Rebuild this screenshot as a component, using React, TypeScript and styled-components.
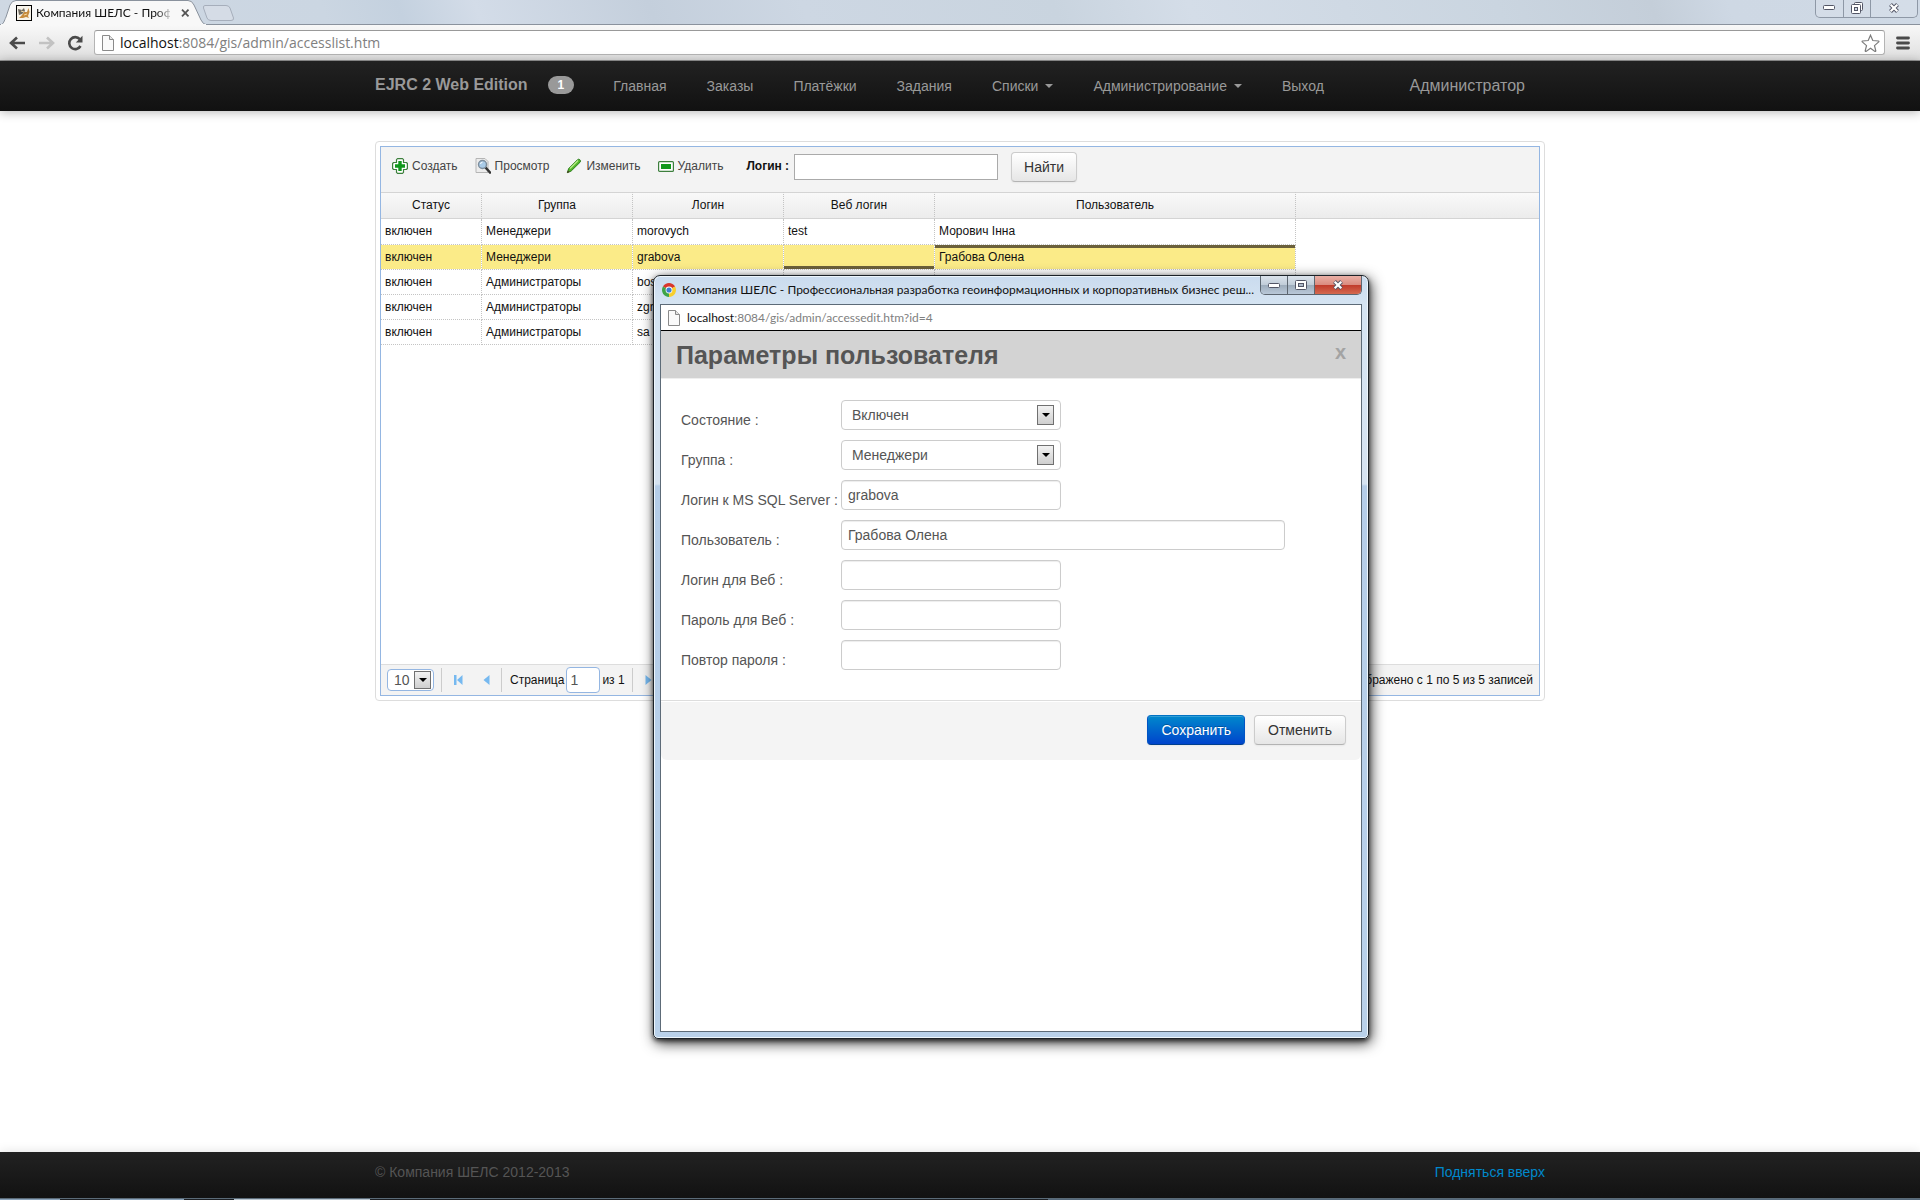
import React, { useState } from "react";
import styled, { createGlobalStyle, css } from "styled-components";

const Global = createGlobalStyle`
  *, *::before, *::after { box-sizing: border-box; }
  body {
    margin: 0;
    background: #fff;
    color: #555;
    font: 14px/20px "Liberation Sans", Arial, sans-serif;
  }
  button, input, select { font: inherit; margin: 0; }
`;

const systemFont = `"Open Sans", "Noto Sans", sans-serif`;
const captionFont = `Lato, "Noto Sans", sans-serif`;

const Screen = styled.div`
  position: relative;
  display: flex;
  flex-direction: column;
  min-height: 100vh;
`;

/* ---------- browser chrome ---------- */

const TabStrip = styled.div`
  display: flex;
  justify-content: space-between;
  height: 25px;
  border-bottom: 1px solid #8a929d;
  background: linear-gradient(70deg, #cfd8e3 0%, #cbd6e2 17%, #c4d1df 21%, #d3dce8 25%, #c4cfdc 34%, #cdd7e3 42%, #c9d4df 55%, #d4dde8 62%, #cad5e0 78%, #c4ced9 86%, #ced8e4 90%, #cfd9e5 100%);
`;

const Tabs = styled.div`
  display: flex;
`;

const Tab = styled.div`
  position: relative;
  display: flex;
  align-items: center;
  width: 205px;
  height: 25px;
  padding: 0 14px 0 16px;
  gap: 4px;
  font: 12px/20px ${captionFont};
  color: #111;
`;

const TabShape = styled.svg`
  position: absolute;
  inset: 0;
`;

const Favicon = styled.svg`
  position: relative;
  flex: none;
`;

const TabTitle = styled.span`
  position: relative;
  flex: none;
  width: 134px;
  white-space: nowrap;
  mask-image: linear-gradient(90deg, #000 120px, transparent 138px);
`;

const IconButton = styled.button`
  position: relative;
  display: flex;
  align-items: center;
  justify-content: center;
  padding: 0;
  border: 0;
  background: none;
`;

const WindowButtons = styled.div`
  display: flex;
  height: 18px;
  margin-right: 2px;
  border: 1px solid #8e98a6;
  border-top: 0;
  border-radius: 0 0 5px 5px;
  overflow: hidden;
`;

const WindowButton = styled.button<{ $wide?: boolean }>`
  display: flex;
  align-items: center;
  justify-content: center;
  width: ${(p) => (p.$wide ? 47 : 27)}px;
  padding: 0 0 2px;
  border: 0;
  background: rgba(255, 255, 255, 0.12);
  & + & { border-left: 1px solid #8e98a6; }
`;

const Toolbar = styled.div`
  display: flex;
  align-items: center;
  height: 36px;
  padding: 0 8px 0 9px;
  border-bottom: 1px solid #979797;
  background: linear-gradient(#f8f8f8, #dfdfdf);
`;

const NavIcons = styled.div`
  display: flex;
  gap: 12px;
  width: 85px;
`;

const Address = styled.div`
  display: flex;
  flex: 1;
  align-items: center;
  height: 25px;
  padding: 0 4px 0 7px;
  border: 1px solid #b4b4b4;
  border-top-color: #999;
  border-radius: 3px;
  background: #fff;
`;

const AddressText = styled.span<{ $small?: boolean }>`
  flex: 1;
  margin-left: ${(p) => (p.$small ? 7 : 6)}px;
  font: ${(p) => (p.$small ? `12px/20px ${captionFont}` : `14px/20px ${systemFont}`)};
  color: #808080;
  b { font-weight: 400; color: #111; }
`;

const MenuButton = styled(IconButton)`
  width: 18px;
  margin-left: 9px;
`;

/* ---------- site header and footer ---------- */

const Container = styled.div`
  width: 100%;
  max-width: 1170px;
  margin: 0 auto;
`;

const NavBar = styled.header`
  flex: none;
  background: linear-gradient(#222, #111);
  box-shadow: 0 1px 10px rgba(0, 0, 0, 0.3);
`;

const NavInner = styled(Container)`
  display: flex;
  align-items: center;
  height: 50px;
  color: #999;
`;

const Brand = styled.a`
  padding-bottom: 2px;
  color: #999;
  font-size: 16px;
  font-weight: 700;
  text-decoration: none;
`;

const Badge = styled.span`
  height: 18px;
  margin: 0 19px 3px 20px;
  padding: 0 10px;
  border-radius: 9px;
  background: #999;
  color: #fff;
  font-size: 12px;
  font-weight: 700;
  line-height: 18px;
`;

const Nav = styled.nav`
  display: flex;
  flex: 1;
`;

const NavLink = styled.a`
  display: flex;
  align-items: center;
  gap: 7px;
  padding: 0 20px;
  color: #999;
  text-decoration: none;
`;

const Caret = styled.span`
  border: 4px solid transparent;
  border-top-color: #999;
  border-bottom: 0;
`;

const UserName = styled.span`
  padding-right: 20px;
  font-size: 16px;
`;

const Footer = styled.footer`
  margin-top: auto;
  background: linear-gradient(#222, #111);
  box-shadow: 0 -1px 10px rgba(0, 0, 0, 0.1);
`;

const FooterInner = styled(Container)`
  display: flex;
  align-items: center;
  justify-content: space-between;
  height: 46px;
  padding-bottom: 6px;
  a { color: #08c; text-decoration: none; }
`;

const TaskEdge = styled.div`
  height: 2px;
  border-top: 1px solid #5b6b78;
  background: linear-gradient(90deg, #8aa3ba 0 60px, #1b1f24 60px 110px, #8aa3ba 110px 184px, #1b1f24 184px 234px, #b9c6d0 234px 370px, #1b1f24 370px 1048px, #54687a 1048px);
`;

/* ---------- grid ---------- */

const GridFrame = styled(Container)`
  margin-top: 30px;
  padding: 4px;
  border: 1px solid #ddd;
  border-radius: 4px;
`;

const Grid = styled.section`
  display: flex;
  flex-direction: column;
  height: 550px;
  border: 1px solid #94b6e2;
  font-size: 12px;
`;

const GridTools = styled.form`
  display: flex;
  align-items: center;
  height: 45px;
  padding: 0 10px 8px 11px;
  background: #f3f3f3;
`;

const ToolButton = styled.button`
  display: flex;
  align-items: center;
  gap: 4px;
  margin-right: 17px;
  padding: 0;
  border: 0;
  background: none;
  color: #444;
  line-height: 18px;
`;

const SearchLabel = styled.label`
  margin: 0 5px 0 6px;
  color: #111;
  font-weight: 700;
`;

const SearchInput = styled.input`
  width: 204px;
  height: 26px;
  margin: 2px 13px 0 0;
  border: 1px solid #aaa;
  background: #fff;
`;

const Button = styled.button<{ $primary?: boolean }>`
  height: 30px;
  padding: 0 13px;
  border: 1px solid #ccc;
  border-bottom-color: #b3b3b3;
  border-radius: 4px;
  background: linear-gradient(#fff, #e6e6e6);
  box-shadow: inset 0 1px 0 rgba(255, 255, 255, 0.2), 0 1px 2px rgba(0, 0, 0, 0.05);
  color: #333;
  font-size: 14px;
  ${(p) =>
    p.$primary &&
    css`
      border-color: #0072c4 #0054c4 #003f8f;
      background: linear-gradient(#08c, #04c);
      color: #fff;
      text-shadow: 0 -1px 0 rgba(0, 0, 0, 0.25);
    `}
`;

const FindButton = styled(Button)`
  margin-top: 2px;
  padding: 0 12px;
`;

const Table = styled.table`
  width: 100%;
  table-layout: fixed;
  border-spacing: 0;
  color: #111;
  th {
    height: 27px;
    padding: 0 0 2px;
    border: solid #d4d4d4;
    border-width: 1px 0;
    background: linear-gradient(#f9f9f9, #ececec);
    font-weight: 400;
  }
  th:not(:last-child) { border-right: 1px dotted #c4c4c4; }
`;

const stripes: Record<string, string> = {
  top: "linear-gradient(#6b603b 3px, transparent 3px)",
  bottom: "linear-gradient(0deg, #6b603b 3px, transparent 3px)",
};

const Cell = styled.td<{ $on?: boolean; $edge?: string }>`
  height: 25px;
  padding: 0 4px;
  border-right: 1px dotted #c4c4c4;
  border-bottom: 1px dotted #c4c4c4;
  background-color: ${(p) => (p.$on ? "#fbeb88" : "#fff")};
  background-image: ${(p) => (p.$edge ? stripes[p.$edge] : "none")};
  background-clip: padding-box;
  tr:first-child > & {
    height: 26px;
    padding-bottom: 2px;
  }
`;

const Pager = styled.div`
  display: flex;
  align-items: center;
  height: 31px;
  margin-top: auto;
  padding: 0 6px;
  border-top: 1px solid #ddd;
  background: #f3f3f3;
  color: #111;
`;

const SelectBox = styled.span<{ $small?: boolean }>`
  position: relative;
  display: inline-flex;
  justify-self: start;
  select {
    width: ${(p) => (p.$small ? 47 : 220)}px;
    height: ${(p) => (p.$small ? 22 : 30)}px;
    padding: 0 ${(p) => (p.$small ? 6 : 10)}px;
    border: 1px solid ${(p) => (p.$small ? "#94b6e2" : "#ccc")};
    border-radius: 4px;
    appearance: none;
    background: #fff;
    color: #555;
    font-size: 14px;
  }
`;

const DropArrow = styled.span<{ $small?: boolean }>`
  position: absolute;
  top: ${(p) => (p.$small ? 2 : 5)}px;
  right: ${(p) => (p.$small ? 3 : 7)}px;
  display: flex;
  align-items: center;
  justify-content: center;
  width: 17px;
  height: ${(p) => (p.$small ? 18 : 20)}px;
  border: 1px solid #707070;
  background: linear-gradient(#f2f2f2, #cfcfcf);
  pointer-events: none;
  &::after {
    content: "";
    border: 4px solid transparent;
    border-top-color: #000;
    border-bottom: 0;
  }
`;

const Separator = styled.span`
  width: 1px;
  height: 24px;
  margin: 0 8px 0 7px;
  background: #ccc;
`;

const PageButtons = styled.div`
  display: flex;
  gap: 12px;
`;

const PageButton = styled(IconButton)`
  width: 16px;
  height: 22px;
`;

const PageLabel = styled.label`
  display: flex;
  align-items: center;
  gap: 2px;
`;

const PageInput = styled.input`
  width: 34px;
  height: 26px;
  padding: 0 3px;
  border: 1px solid #94b6e2;
  border-radius: 4px;
  background: #fff;
  color: #555;
  font-size: 14px;
`;

const PageTotal = styled.span`
  margin-left: auto;
`;

/* ---------- popup window ---------- */

const Popup = styled.section`
  position: absolute;
  top: 275px;
  left: calc(50% - 307px);
  display: flex;
  flex-direction: column;
  width: 716px;
  height: 764px;
  padding: 0 6px 6px;
  border: 1px solid #1c2228;
  border-radius: 7px 7px 5px 5px;
  background: linear-gradient(#cadbee, #d5e4f2 28px, #d6e3f1 208px, #b5cde8 210px, #b9d1ea);
  box-shadow: inset 0 0 0 1px #eef6fc, 0 2px 4px rgba(0, 0, 0, 0.6), 2px 4px 14px rgba(0, 0, 0, 0.8);
`;

const PopupTitle = styled.div`
  display: flex;
  align-items: center;
  justify-content: space-between;
  height: 28px;
  color: #111;
  font: 12px/28px ${captionFont};
`;

const PopupCaption = styled.div`
  display: flex;
  flex: 1;
  align-items: center;
  gap: 6px;
  min-width: 0;
  padding-left: 2px;
  white-space: nowrap;
  svg { flex: none; }
`;

const PopupButtons = styled.div`
  display: flex;
  align-self: flex-start;
  flex: none;
  height: 19px;
  border: 1px solid #5c6670;
  border-top: 0;
  border-radius: 0 0 5px 5px;
  overflow: hidden;
`;

const PopupButton = styled.button<{ $close?: boolean }>`
  display: flex;
  align-items: center;
  justify-content: center;
  width: ${(p) => (p.$close ? 46 : 27)}px;
  padding: 0;
  border: 0;
  border-right: ${(p) => (p.$close ? "0" : "1px solid #5c6670")};
  background: ${(p) =>
    p.$close
      ? "linear-gradient(#eab0a6, #da8a7e 9px, #c0392a 9px, #d46a50)"
      : "linear-gradient(#dbe3eb, #c0ccd8 9px, #9dacbb 9px, #b9c8d8)"};
`;

const PopupPage = styled.div`
  flex: 1;
  border: 1px solid #5d6b78;
  background: #fff;
`;

const PopupAddress = styled.div`
  display: flex;
  align-items: center;
  height: 26px;
  padding-left: 7px;
  border-bottom: 1px solid #000;
`;

const DialogHead = styled.div`
  display: flex;
  align-items: center;
  justify-content: space-between;
  height: 48px;
  padding: 0 15px;
  border-bottom: 1px solid #eee;
  background: #d3d3d3;
  h3 { margin: 0; font-size: 25px; line-height: 40px; }
`;

const CloseButton = styled.button`
  padding: 0 0 5px;
  border: 0;
  background: none;
  color: #a3a3a3;
  font-size: 20px;
  font-weight: 700;
  line-height: 20px;
`;

const Fields = styled.div`
  display: grid;
  gap: 10px;
  padding: 21px 20px 30px;
`;

const Field = styled.div`
  display: grid;
  grid-template-columns: 160px 1fr;
  align-items: center;
  label { padding-top: 10px; white-space: nowrap; }
`;

const TextInput = styled.input<{ $wide?: boolean }>`
  width: ${(p) => (p.$wide ? 444 : 220)}px;
  height: 30px;
  padding: 0 6px;
  border: 1px solid #ccc;
  border-radius: 4px;
  background: #fff;
  box-shadow: inset 0 1px 1px rgba(0, 0, 0, 0.075);
  color: #555;
`;

const DialogFoot = styled.div`
  display: flex;
  justify-content: flex-end;
  gap: 9px;
  padding: 14px 15px 15px;
  border-top: 1px solid #ddd;
  border-radius: 0 0 6px 6px;
  background: #f4f4f4;
  box-shadow: inset 0 1px 0 #fff;
`;

/* ---------- icons ---------- */

const PageIcon = () => (
  <svg width="12" height="16" viewBox="0 0 12 16">
    <path d="M.5 .5h7l4 4v11H.5z" fill="#fafafa" stroke="#8a8a8a" />
    <path d="M7.500 .5v4h4" fill="#e4e4e4" stroke="#8a8a8a" />
  </svg>
);

const BackIcon = ({ color, flip }: { color: string; flip?: boolean }) => (
  <svg width="17" height="14" viewBox="0 0 17 14">
    <path
      d={flip ? "M1 7h14M9 1.500l6 5.500l-6 5.500" : "M16 7H2M8 1.500L2 7l6 5.500"}
      fill="none"
      stroke={color}
      strokeWidth="2.600"
    />
  </svg>
);

const ReloadIcon = () => (
  <svg width="16" height="16" viewBox="0 0 16 16">
    <path d="M12.800 4.200A6 6 0 1 0 13.500 11" fill="none" stroke="#4a4a4a" strokeWidth="2.600" />
    <path d="M15.500 .8v6.700H8.800z" fill="#4a4a4a" />
  </svg>
);

const CreateIcon = () => (
  <svg width="16" height="16" viewBox="0 0 16 16">
    <path
      d="M5.500 .6h5l1 1v2.900h2.900l1 1v5l-1 1h-2.900v2.900l-1 1h-5l-1-1v-2.900H1.600l-1-1v-5l1-1h2.900V1.600z"
      fill="#fff"
      stroke="#3d7f3d"
      strokeWidth="1.200"
      strokeLinejoin="round"
    />
    <path d="M6.300 3h3.400v3.300H13v3.400H9.700V13H6.300V9.700H3V6.300h3.300z" fill="#11981c" />
  </svg>
);

const ViewIcon = () => (
  <svg width="16" height="16" viewBox="0 0 16 16">
    <path d="M1 .5h9l3 3v11H1z" fill="#ececec" stroke="#b5b5b5" />
    <path d="M10.500 9.500l4.500 5" stroke="#333" strokeWidth="2.600" strokeLinecap="round" />
    <circle cx="7.500" cy="6.500" r="4" fill="#a9cbe8" stroke="#7d8d9c" strokeWidth="1.400" />
    <path d="M5.500 6a2.200 2.200 0 0 1 2-1.800" stroke="#fff" fill="none" />
  </svg>
);

const EditIcon = () => (
  <svg width="16" height="16" viewBox="0 0 16 16">
    <path d="M1.300 14.700l1.400-4.200L11.500 1.700q1.200-1 2.300 0q1.300 1.200 .3 2.500L5.200 13z" fill="#55b82c" stroke="#2d7d1c" />
    <path d="M4 10.500l8-8" stroke="#b9ee8a" strokeWidth="1.200" />
    <path d="M1 15l1-2.600 1.600 1.500z" fill="#4a3520" />
  </svg>
);

const DeleteIcon = () => (
  <svg width="16" height="16" viewBox="0 0 16 16">
    <rect x=".6" y="3.600" width="14.800" height="9.800" rx="1" fill="#fff" stroke="#3d7f3d" strokeWidth="1.200" />
    <rect x="3" y="6" width="10" height="5" fill="#11981c" />
  </svg>
);

const FirstIcon = () => (
  <svg width="9" height="10" viewBox="0 0 9 10">
    <path d="M0 0h2.500v10H0zM8.500 0v10L3 5z" fill="#76b9f0" />
  </svg>
);

const ArrowIcon = ({ right }: { right?: boolean }) => (
  <svg width="7" height="10" viewBox="0 0 7 10">
    <path d={right ? "M.5 0v10L6.500 5z" : "M6.500 0v10L.5 5z"} fill="#76b9f0" />
  </svg>
);

const ChromeIcon = () => (
  <svg width="14" height="14" viewBox="0 0 14 14">
    <path d="M7 7L.94 3.500A7 7 0 0 1 13.060 3.500z" fill="#d9372c" />
    <path d="M7 7L13.060 3.500A7 7 0 0 1 7 14z" fill="#f7cf2e" />
    <path d="M7 7L7 14A7 7 0 0 1 .94 3.500z" fill="#3fa447" />
    <circle cx="7" cy="7" r="3.400" fill="#fff" />
    <circle cx="7" cy="7" r="2.600" fill="#3d7fd0" />
  </svg>
);

const MinIcon = () => (
  <svg width="13" height="7" viewBox="0 0 13 7">
    <rect x=".5" y="1.500" width="11" height="4" rx="1" fill="#fff" stroke="#535666" />
  </svg>
);

const MaxIcon = () => (
  <svg width="12" height="10" viewBox="0 0 12 10">
    <rect x=".5" y=".5" width="11" height="9" rx="1" fill="#fff" stroke="#535666" />
    <rect x="3.500" y="3.500" width="5" height="3" fill="#b0bccb" stroke="#535666" />
  </svg>
);

const RestoreIcon = () => (
  <svg width="13" height="12" viewBox="0 0 13 12">
    <rect x="3.500" y=".5" width="8" height="8" rx="1" fill="#fff" stroke="#535666" />
    <rect x=".5" y="2.500" width="9" height="9" rx="1" fill="#fff" stroke="#535666" />
    <rect x="3.500" y="5.500" width="3" height="3" fill="#cfd9e5" stroke="#535666" />
  </svg>
);

const CrossIcon = () => (
  <svg width="12" height="10" viewBox="0 0 12 10">
    <path d="M2.500 1.500l7 7M9.500 1.500l-7 7" stroke="#535666" strokeWidth="4" />
    <path d="M2.700 1.700l6.600 6.600M9.300 1.700L2.700 8.300" stroke="#fff" strokeWidth="2.200" />
  </svg>
);

/* ---------- data ---------- */

const links = [
  { text: "Главная" },
  { text: "Заказы" },
  { text: "Платёжки" },
  { text: "Задания" },
  { text: "Списки", menu: true },
  { text: "Администрирование", menu: true },
  { text: "Выход" },
];

const tools = [
  { text: "Создать", icon: <CreateIcon /> },
  { text: "Просмотр", icon: <ViewIcon /> },
  { text: "Изменить", icon: <EditIcon /> },
  { text: "Удалить", icon: <DeleteIcon /> },
];

const columns = ["Статус", "Группа", "Логин", "Веб логин", "Пользователь"];
const widths = [101, 151, 151, 151, 361];

const rows = [
  ["включен", "Менеджери", "morovych", "test", "Морович Інна"],
  ["включен", "Менеджери", "grabova", "", "Грабова Олена"],
  ["включен", "Администраторы", "bos", "", ""],
  ["включен", "Администраторы", "zgr", "", ""],
  ["включен", "Администраторы", "sa", "", ""],
];

const selected = 1;
const edges: Record<number, string> = { 3: "bottom", 4: "top" };

const inputs = [
  { id: "sql", text: "Логин к MS SQL Server :", value: "grabova" },
  { id: "user", text: "Пользователь :", value: "Грабова Олена", wide: true },
  { id: "web", text: "Логин для Веб :", value: "" },
  { id: "pass", text: "Пароль для Веб :", value: "", type: "password" },
  { id: "again", text: "Повтор пароля :", value: "", type: "password" },
];

const BrowserChrome = () => (
  <>
    <TabStrip>
      <Tabs>
        <Tab>
          <TabShape width="236" height="25" viewBox="0 0 236 25">
            <path d="M0 25C4 24 4 21 6 17L10 5Q12 .5 16 .5H188Q192 .5 194 5L201 20Q203 24.500 207 25z" fill="#f8f8f8" stroke="#8a929d" />
            <path d="M1 25h205" stroke="#f8f8f8" strokeWidth="2" />
            <path d="M205 5.500H226Q229 5.500 230 8L233.500 18Q234 20.500 231 20.500H211Q208 20.500 207 18L203.500 8Q203 5.500 205 5.500z" fill="#d5dce6" stroke="#a6aebb" />
          </TabShape>
          <Favicon width="16" height="16" viewBox="0 0 16 16">
            <rect x=".5" y=".5" width="15" height="15" fill="#f7f3ea" stroke="#000" />
            <path d="M3 13l3-3 2-3 3 0 1.500-4 1 4-1.500 4 1 2-3-1-3 1z" fill="#c68a3c" />
            <path d="M2 4l4 1 2-2 1 3-3 3-3 1z" fill="#6f6a60" />
            <path d="M5 6l3 1M8 10l3-1" stroke="#f3d9a0" />
          </Favicon>
          <TabTitle>Компания ШЕЛС - Профе</TabTitle>
          <IconButton aria-label="Закрыть вкладку">
            <svg width="18" height="8" viewBox="0 0 18 8">
              <path d="M8 .7l6.500 6.600M14.500 .7L8 7.300" stroke="#555" strokeWidth="1.800" />
            </svg>
          </IconButton>
        </Tab>
      </Tabs>
      <WindowButtons>
        <WindowButton aria-label="Свернуть"><MinIcon /></WindowButton>
        <WindowButton aria-label="Восстановить"><RestoreIcon /></WindowButton>
        <WindowButton $wide aria-label="Закрыть"><CrossIcon /></WindowButton>
      </WindowButtons>
    </TabStrip>
    <Toolbar>
      <NavIcons>
        <IconButton aria-label="Назад"><BackIcon color="#4a4a4a" /></IconButton>
        <IconButton aria-label="Вперёд"><BackIcon color="#c2c2c2" flip /></IconButton>
        <IconButton aria-label="Обновить"><ReloadIcon /></IconButton>
      </NavIcons>
      <Address>
        <PageIcon />
        <AddressText><b>localhost</b>:8084/gis/admin/accesslist.htm</AddressText>
        <svg width="19" height="18" viewBox="0 0 19 18">
          <path
            d="M9.500 1.200l2.300 5.300 5.700 .5q.7 .3 .2 .9l-4.200 3.700 1.300 5.300q-.1 .8-.8 .5L9.500 14.300 5 17.400q-.7 .3-.8-.5l1.300-5.300L1.300 7.900q-.5-.6 .2-.9l5.700-.5z"
            fill="#fff"
            stroke="#7c7c7c"
            strokeWidth="1.200"
          />
        </svg>
      </Address>
      <MenuButton aria-label="Меню">
        <svg width="14" height="14" viewBox="0 0 14 14">
          <path d="M1.500 2h11M1.500 7h11M1.500 12h11" stroke="#4a4a4a" strokeWidth="2.800" strokeLinecap="round" />
        </svg>
      </MenuButton>
    </Toolbar>
  </>
);

const AccessGrid = () => {
  const [page, setPage] = useState("1");
  return (
    <GridFrame as="main">
      <Grid>
        <GridTools onSubmit={(e) => e.preventDefault()}>
          {tools.map((t) => (
            <ToolButton key={t.text} type="button">
              {t.icon}
              {t.text}
            </ToolButton>
          ))}
          <SearchLabel htmlFor="search">Логин :</SearchLabel>
          <SearchInput id="search" type="text" />
          <FindButton type="submit">Найти</FindButton>
        </GridTools>
        <Table>
          <colgroup>
            {widths.map((w, i) => (
              <col key={i} width={w} />
            ))}
            <col />
          </colgroup>
          <thead>
            <tr>
              {columns.map((c) => (
                <th key={c}>{c}</th>
              ))}
              <th aria-hidden="true" />
            </tr>
          </thead>
          <tbody>
            {rows.map((row, r) => (
              <tr key={r}>
                {row.map((text, c) => (
                  <Cell key={c} $on={r === selected} $edge={r === selected ? edges[c] : undefined}>
                    {text}
                  </Cell>
                ))}
              </tr>
            ))}
          </tbody>
        </Table>
        <Pager>
          <SelectBox $small>
            <select aria-label="Записей на странице">
              <option>10</option>
            </select>
            <DropArrow $small />
          </SelectBox>
          <Separator />
          <PageButtons>
            <PageButton aria-label="Первая"><FirstIcon /></PageButton>
            <PageButton aria-label="Предыдущая"><ArrowIcon /></PageButton>
          </PageButtons>
          <Separator />
          <PageLabel>
            Страница
            <PageInput value={page} onChange={(e) => setPage(e.target.value)} />
            из 1
          </PageLabel>
          <Separator />
          <PageButton aria-label="Следующая"><ArrowIcon right /></PageButton>
          <PageTotal>Отображено с 1 по 5 из 5 записей</PageTotal>
        </Pager>
      </Grid>
    </GridFrame>
  );
};

const UserPopup = () => (
  <Popup>
    <PopupTitle>
      <PopupCaption>
        <ChromeIcon />
        <span>Компания ШЕЛС - Профессиональная разработка геоинформационных и корпоративных бизнес реш...</span>
      </PopupCaption>
      <PopupButtons>
        <PopupButton aria-label="Свернуть"><MinIcon /></PopupButton>
        <PopupButton aria-label="Развернуть"><MaxIcon /></PopupButton>
        <PopupButton $close aria-label="Закрыть"><CrossIcon /></PopupButton>
      </PopupButtons>
    </PopupTitle>
    <PopupPage>
      <PopupAddress>
        <PageIcon />
        <AddressText $small><b>localhost</b>:8084/gis/admin/accessedit.htm?id=4</AddressText>
      </PopupAddress>
      <form onSubmit={(e) => e.preventDefault()}>
        <DialogHead>
          <h3>Параметры пользователя</h3>
          <CloseButton type="button">x</CloseButton>
        </DialogHead>
        <Fields>
          <Field>
            <label htmlFor="state">Состояние :</label>
            <SelectBox>
              <select id="state"><option>Включен</option></select>
              <DropArrow />
            </SelectBox>
          </Field>
          <Field>
            <label htmlFor="group">Группа :</label>
            <SelectBox>
              <select id="group"><option>Менеджери</option></select>
              <DropArrow />
            </SelectBox>
          </Field>
          {inputs.map((f) => (
            <Field key={f.id}>
              <label htmlFor={f.id}>{f.text}</label>
              <TextInput id={f.id} type={f.type ?? "text"} defaultValue={f.value} $wide={f.wide} />
            </Field>
          ))}
        </Fields>
        <DialogFoot>
          <Button $primary type="submit">Сохранить</Button>
          <Button type="button">Отменить</Button>
        </DialogFoot>
      </form>
    </PopupPage>
  </Popup>
);

export default function App() {
  return (
    <Screen>
      <Global />
      <BrowserChrome />
      <NavBar>
        <NavInner>
          <Brand href="#">EJRC 2 Web Edition</Brand>
          <Badge>1</Badge>
          <Nav>
            {links.map((l) => (
              <NavLink key={l.text} href="#">
                {l.text}
                {l.menu && <Caret />}
              </NavLink>
            ))}
          </Nav>
          <UserName>Администратор</UserName>
        </NavInner>
      </NavBar>
      <AccessGrid />
      <Footer>
        <FooterInner>
          <span>© Компания ШЕЛС 2012-2013</span>
          <a href="#">Подняться вверх</a>
        </FooterInner>
        <TaskEdge />
      </Footer>
      <UserPopup />
    </Screen>
  );
}
